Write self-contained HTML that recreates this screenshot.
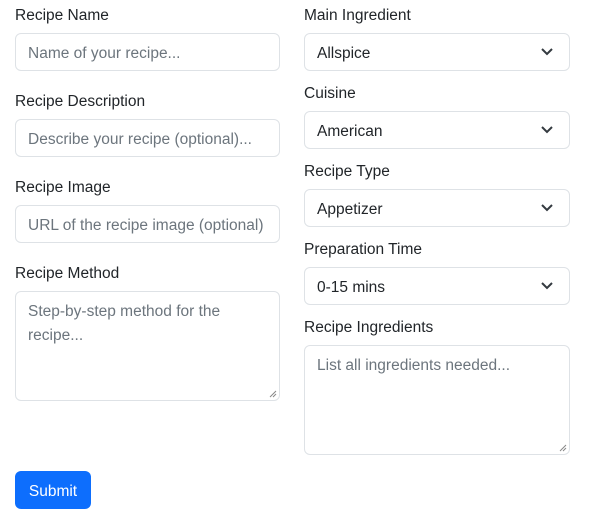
<!DOCTYPE html>
<html><head><style>
*{box-sizing:border-box;margin:0;padding:0}
body{width:591px;height:524px;background:#fff;font-family:"Liberation Sans",sans-serif;color:#212529;position:relative;overflow:hidden}
.l{position:absolute;font-size:15.5px;line-height:24px;padding-top:2px}
.i{position:absolute;border:1px solid #dee2e6;border-radius:6px;font-size:15.5px;color:#6c757d;padding:2px 12px 0;line-height:36px;white-space:nowrap;overflow:hidden;background:#fff}
.s{color:#212529}
.s svg{position:absolute;right:16px;top:13px}
.t{line-height:24px;padding-top:8px;white-space:normal}
.rz{position:absolute;right:2px;bottom:2px}
.btn{position:absolute;left:15px;top:471px;width:76px;height:38px;background:#0d6efd;color:#fff;border-radius:6px;font-size:15.5px;line-height:38px;padding-top:2px;text-align:center}
</style></head><body>
<div class="l" style="left:15px;top:2px">Recipe Name</div>
<div class="i" style="left:15px;top:33px;width:265px;height:38px">Name of your recipe...</div>
<div class="l" style="left:15px;top:88px">Recipe Description</div>
<div class="i" style="left:15px;top:119px;width:265px;height:38px">Describe your recipe (optional)...</div>
<div class="l" style="left:15px;top:174px">Recipe Image</div>
<div class="i" style="left:15px;top:205px;width:265px;height:38px">URL of the recipe image (optional)</div>
<div class="l" style="left:15px;top:260px">Recipe Method</div>
<div class="i t" style="left:15px;top:291px;width:265px;height:110px">Step-by-step method for the recipe...<svg class="rz" width="8" height="8"><path d="M1 7L7 1M4 7L7 4" stroke="#888" stroke-width="1"/></svg></div>

<div class="l" style="left:304px;top:2px">Main Ingredient</div>
<div class="i s" style="left:304px;top:33px;width:266px;height:38px">Allspice<svg width="12" height="10"><path d="M1 2l5 5 5-5" fill="none" stroke="#343a40" stroke-width="2"/></svg></div>
<div class="l" style="left:304px;top:80px">Cuisine</div>
<div class="i s" style="left:304px;top:111px;width:266px;height:38px">American<svg width="12" height="10"><path d="M1 2l5 5 5-5" fill="none" stroke="#343a40" stroke-width="2"/></svg></div>
<div class="l" style="left:304px;top:158px">Recipe Type</div>
<div class="i s" style="left:304px;top:189px;width:266px;height:38px">Appetizer<svg width="12" height="10"><path d="M1 2l5 5 5-5" fill="none" stroke="#343a40" stroke-width="2"/></svg></div>
<div class="l" style="left:304px;top:236px">Preparation Time</div>
<div class="i s" style="left:304px;top:267px;width:266px;height:38px">0-15 mins<svg width="12" height="10"><path d="M1 2l5 5 5-5" fill="none" stroke="#343a40" stroke-width="2"/></svg></div>
<div class="l" style="left:304px;top:314px">Recipe Ingredients</div>
<div class="i t" style="left:304px;top:345px;width:266px;height:110px">List all ingredients needed...<svg class="rz" width="8" height="8"><path d="M1 7L7 1M4 7L7 4" stroke="#888" stroke-width="1"/></svg></div>

<div class="btn">Submit</div>
</body></html>
